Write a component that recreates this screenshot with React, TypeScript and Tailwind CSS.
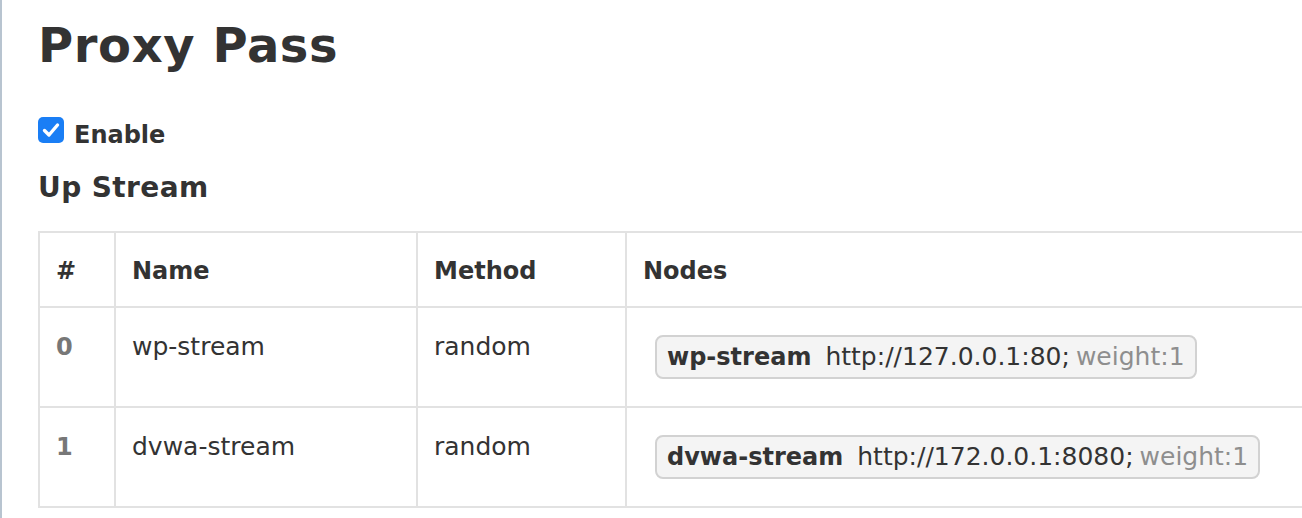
import React from "react";

const rows = [
  { id: "0", name: "wp-stream", method: "random", node: "wp-stream", url: "http://127.0.0.1:80;", weight: "weight:1" },
  { id: "1", name: "dvwa-stream", method: "random", node: "dvwa-stream", url: "http://172.0.0.1:8080;", weight: "weight:1" },
];

function CheckBox() {
  return (
    <div className="w-[26px] h-[26px] rounded-[5px] bg-[#1a7ef5] flex items-center justify-center shrink-0">
      <svg width="26" height="26" viewBox="0 0 26 26" fill="none">
        <polyline points="6.5,13.5 11,18 19.5,8" stroke="white" strokeWidth="3.4" strokeLinecap="round" strokeLinejoin="round" />
      </svg>
    </div>
  );
}

export default function App() {
  return (
    <div className="w-full h-[518px] overflow-hidden bg-white border-l-2 border-[#b8c4d0] font-['DejaVu_Sans',sans-serif] text-[#333]">
      <div className="pl-[36px] pt-[21px]">
        <h1 className="text-[48px] leading-[48px] font-bold tracking-[0.6px]">Proxy Pass</h1>
        <div className="mt-[48px] flex items-start gap-[10px]">
          <CheckBox />
          <span className="mt-[6px] text-[24px] leading-[24px] font-bold">Enable</span>
        </div>
        <h2 className="mt-[27px] text-[28px] leading-[28px] font-bold tracking-[0.4px]">Up Stream</h2>
        <div className="mt-[29px] border-t-2 border-l-2 border-[#e2e2e2]">
          <div className="flex h-[75px] border-b-2 border-[#e2e2e2] text-[24px] leading-[30px] font-bold">
            <div className="w-[76px] shrink-0 border-r-2 border-[#e2e2e2] pl-[16px] pt-[23px]">#</div>
            <div className="w-[302px] shrink-0 border-r-2 border-[#e2e2e2] pl-[16px] pt-[23px]">Name</div>
            <div className="w-[209px] shrink-0 border-r-2 border-[#e2e2e2] pl-[16px] pt-[23px]">Method</div>
            <div className="flex-1 pl-[16px] pt-[23px]">Nodes</div>
          </div>
          {rows.map((r) => (
            <div key={r.id} className="flex h-[100px] border-b-2 border-[#e2e2e2] text-[25px] leading-[30px]">
              <div className="w-[76px] shrink-0 border-r-2 border-[#e2e2e2] pl-[16px] pt-[24px] text-[24px] font-bold text-[#777]">{r.id}</div>
              <div className="w-[302px] shrink-0 border-r-2 border-[#e2e2e2] pl-[16px] pt-[24px]">{r.name}</div>
              <div className="w-[209px] shrink-0 border-r-2 border-[#e2e2e2] pl-[16px] pt-[24px]">{r.method}</div>
              <div className="flex-1 pl-[28px] pt-[27px]">
                <span className="inline-flex items-baseline h-[44px] rounded-[8px] border-2 border-[#d2d2d2] bg-[#f4f4f4] pl-[10px] pr-[10px] pt-[5px] pb-[5px] whitespace-nowrap">
                  <span className="text-[24px] font-bold">{r.node}</span>
                  <span className="ml-[14px]">{r.url}</span>
                  <span className="ml-[6px] text-[#8e8e8e]">{r.weight}</span>
                </span>
              </div>
            </div>
          ))}
        </div>
      </div>
    </div>
  );
}
